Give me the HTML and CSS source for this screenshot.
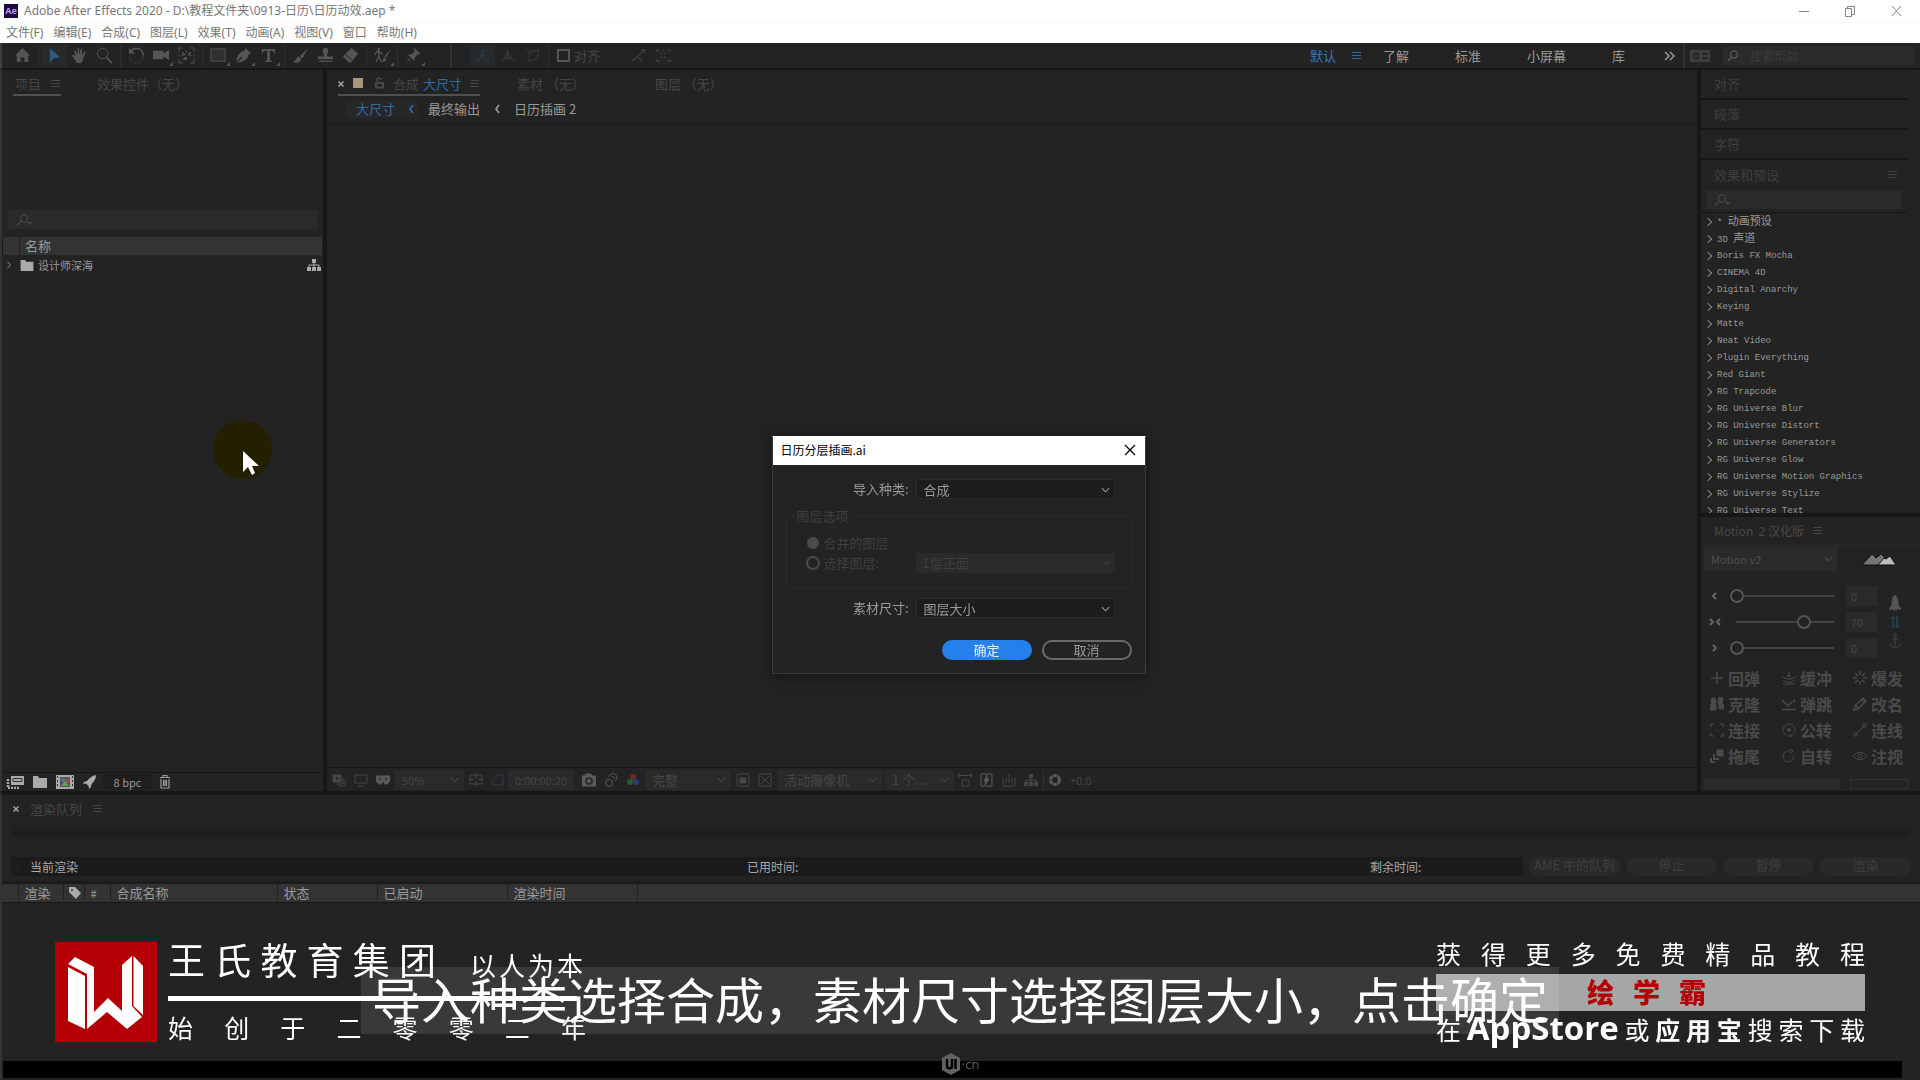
FILE: index.html
```html
<!DOCTYPE html>
<html lang="zh-CN">
<head>
    <meta charset="UTF-8">
    <meta name="viewport" content="width=device-width, initial-scale=1.0">
    <title>Adobe After Effects 2020</title>
    <link rel="stylesheet" href="styles.css">
</head>
<body>

<!-- shared icons -->
<svg class="sprite" aria-hidden="true">
    <symbol id="i-menu" viewBox="0 0 10 10"><path d="M0 1.5h9M0 4.5h9M0 7.5h9" stroke="currentColor" stroke-width="1"/></symbol>
    <symbol id="i-down" viewBox="0 0 10 6"><path d="M1 1l4 4 4-4" fill="none" stroke="currentColor" stroke-width="1.2"/></symbol>
    <symbol id="i-right" viewBox="0 0 6 10"><path d="M1 1l4 4-4 4" fill="none" stroke="currentColor" stroke-width="1.2"/></symbol>
    <symbol id="i-left" viewBox="0 0 6 10"><path d="M5 1L2 5l3 4" fill="none" stroke="currentColor" stroke-width="1.7"/></symbol>
    <symbol id="i-x" viewBox="0 0 8 8"><path d="M1.5 1.5l5 5M6.5 1.5l-5 5" stroke="currentColor" stroke-width="1.4"/></symbol>
    <symbol id="i-find" viewBox="0 0 18 12"><circle cx="8" cy="4.5" r="3.6" fill="none" stroke="currentColor" stroke-width="1.3"/><path d="M5.5 7L1 11.2" stroke="currentColor" stroke-width="1.4"/><path d="M11 8h5.400l-2.700 3z" fill="currentColor"/></symbol>
    <symbol id="i-tree" viewBox="0 0 14 14"><path d="M5 1h4v4H5zM0 9h4v4H0zM5 9h4v4H5zM10 9h4v4h-4z" fill="currentColor"/><path d="M7 5v4M2 9V7h10v2" fill="none" stroke="currentColor"/></symbol>
    <symbol id="i-folder" viewBox="0 0 14 12"><path d="M0 0h5l1 2h8v10H0z" fill="currentColor"/></symbol>
</svg>

<div class="app">
    <header class="titlebar">
        <svg class="ae-logo" viewBox="0 0 14 14"><rect width="14" height="14" fill="#1f0740"/><text x="7" y="10" text-anchor="middle">Ae</text></svg>
        <h1>Adobe After Effects 2020 - D:\教程文件夹\0913-日历\日历动效.aep *</h1>
        <div class="window-btns">
            <button aria-label="最小化"><svg viewBox="0 0 12 12"><path d="M1 6.500h10"/></svg></button>
            <button aria-label="还原"><svg viewBox="0 0 12 12"><path d="M1.500 3.500h6v8h-6zM3.500 3.500v-2h7v8h-3"/></svg></button>
            <button aria-label="关闭"><svg viewBox="0 0 12 12"><path d="M2 1l9 10M11 1L2 11"/></svg></button>
        </div>
    </header>
    <nav class="menubar">
        <button>文件(F)</button>
        <button>编辑(E)</button>
        <button>合成(C)</button>
        <button>图层(L)</button>
        <button>效果(T)</button>
        <button>动画(A)</button>
        <button>视图(V)</button>
        <button>窗口</button>
        <button>帮助(H)</button>
    </nav>

    <div class="toolbar">
        <div class="tools">
            <button class="tool" aria-label="主页"><svg viewBox="0 0 18 18"><path class="fill" d="M9 1L1 9h2v7h4v-5h4v5h4V9h2z"/></svg></button>
        </div>
        <div class="tools">
            <button class="tool active" aria-label="选取"><svg viewBox="0 0 18 18"><path class="fill" d="M4 1v16l4-5 7-1z"/></svg></button>
            <button class="tool" aria-label="手形"><svg viewBox="0 0 18 18"><path class="fill" d="M6 17c-1-3-3-5-5-8l1-1 3 2-2-6 1.500-.500L7 8V1h1.700v7l1.700-6.500 1.500.400L11.300 9l3-4.500 1.200.800-2.500 6.700c-.500 2-1 3-2 5z"/></svg></button>
            <button class="tool" aria-label="缩放"><svg viewBox="0 0 18 18"><circle cx="7" cy="7" r="5.500"/><path d="M11 11l6 6" stroke-width="2"/></svg></button>
        </div>
        <div class="tools">
            <button class="tool" aria-label="旋转"><svg viewBox="0 0 18 18"><path d="M3 5a7 7 0 0 1 13 4" stroke-width="1.800"/><path d="M16 10a7 7 0 0 1-14 0" stroke-dasharray="1.500 1.500"/><path class="fill" d="M1 1v6h6z"/></svg></button>
            <button class="tool more" aria-label="摄像机"><svg viewBox="0 0 18 18"><path class="fill" d="M0 4h11v3l6-4v11l-6-4v3H0z"/></svg></button>
            <button class="tool" aria-label="锚点"><svg viewBox="0 0 18 18"><path d="M1 5V1h4M13 1h4v4M17 13v4h-4M5 17H1v-4M9 4v2M9 12v2M4 9h2M12 9h2M1 8v2M17 8v2" /><path class="fill" d="M5 5l3 3-1 1-3-2zM13 5l-3 3 1 1 3-2zM5 13l3-3 2 2-3 2zM13 13l-3-3z"/></svg></button>
        </div>
        <div class="tools">
            <button class="tool more" aria-label="矩形"><svg viewBox="0 0 18 18"><rect x="1" y="2" width="15" height="13" fill="#303030"/></svg></button>
            <button class="tool more" aria-label="钢笔"><svg viewBox="0 0 18 18"><path class="fill" d="M11 1l6 6-3 1c0 5-4 7-12 9l6-6-1-1-6 6C2 9 5 5 10 4z"/></svg></button>
            <button class="tool more" aria-label="文字"><svg viewBox="0 0 18 18"><path class="fill" d="M2 2h14v5h-1c0-2-1-3-3-3h-1.500v10l2 .500V16h-7v-1.500l2-.500V4H6C4 4 3 5 3 7H2z"/></svg></button>
        </div>
        <div class="tools">
            <button class="tool" aria-label="画笔"><svg viewBox="0 0 18 18"><path class="fill" d="M17 1l-6 11-3-2zM7 10l3 3c-2 4-5 4-9 3 3-1 3-5 6-6z"/></svg></button>
            <button class="tool" aria-label="仿制图章"><svg viewBox="0 0 18 18"><path class="fill" d="M9 1a3 3 0 0 1 3 3c0 2-1.500 3-1.500 6H17v3H1v-3h6.500C7.500 7 6 6 6 4a3 3 0 0 1 3-3zM2 14.500h14V16H2z"/></svg></button>
            <button class="tool" aria-label="橡皮擦"><svg viewBox="0 0 18 18"><path class="fill" d="M10 1l7 6-8 10-3-2-5-5z"/><path d="M4 8l7 6" stroke="#232323"/></svg></button>
        </div>
        <div class="tools roto">
            <button class="tool more" aria-label="Roto 笔刷"><svg viewBox="0 0 18 18"><circle class="fill" cx="5" cy="2.500" r="1.500"/><path d="M1 8l2-3h3l3 3M5 5v5l3 6M5 10l-3 6" stroke-width="1.500"/><path class="fill" d="M18 2l-5 9-2-1zM11 11l2 2c-1 3-3 3-5 2 2 0 1-3 3-4z"/></svg></button>
        </div>
        <div class="tools last">
            <button class="tool more" aria-label="人偶"><svg viewBox="0 0 18 18"><path class="fill" d="M10 1l6 6-1 1h-2l-3 4v3L3 8h3l4-3V3L9 2zM5 12l1 1-5 4z"/></svg></button>
        </div>
        <div class="tools axis">
            <button class="tool active" aria-label="本地轴"><svg viewBox="0 0 18 18"><path d="M9 2v8l-7 5M9 10l7 5M9 10l-3-2M9 10l3-2"/></svg></button>
            <button class="tool" aria-label="世界轴"><svg viewBox="0 0 18 18"><path d="M9 2v8l-7 5M9 10l7 5M9 5l4 7H5z"/></svg></button>
            <button class="tool" aria-label="视图轴"><svg viewBox="0 0 18 18"><path d="M2 2l4 4M6 14l-2 2M7 5l9-2-2 9-6 3-3-3z"/></svg></button>
        </div>
        <label class="snap"><input type="checkbox">对齐</label>
        <div class="tools snap-opts">
            <button class="tool" aria-label="对齐选项"><svg viewBox="0 0 18 18"><path d="M2 15l6-5 5 5M8 10l5-5" stroke-width="1.500"/><path class="fill" d="M11 2h5v5z"/></svg></button>
            <button class="tool" aria-label="对齐边缘"><svg viewBox="0 0 18 18"><path d="M2 5V3h3M13 3h3v2M16 13v2h-3M5 15H2v-2M6 6l2 2M12 6l-2 2M6 12l2-2M12 12l-2-2M9 3v1" stroke-width="1.500"/></svg></button>
        </div>
        <div class="workspaces">
            <button class="current">默认</button>
            <svg class="menu-icon blue"><use href="#i-menu"/></svg>
            <button>了解</button>
            <button>标准</button>
            <button>小屏幕</button>
            <button>库</button>
            <button class="overflow" aria-label="更多"><svg viewBox="0 0 12 10"><path d="M1 1l4 4-4 4M6 1l4 4-4 4" fill="none" stroke="currentColor" stroke-width="1.500"/></svg></button>
        </div>
        <div class="help">
            <svg class="sync" viewBox="0 0 20 12"><rect width="20" height="12" rx="1" fill="#3e3e3e"/><circle cx="6" cy="6" r="2.500" fill="none" stroke="#232323" stroke-width="2"/><path d="M12 4h6M12 8h6" stroke="#232323" stroke-width="2"/></svg>
            <label class="search"><svg viewBox="0 0 12 12"><circle cx="7" cy="4.500" r="3.500" fill="none" stroke="#555" stroke-width="1.500"/><path d="M4.500 7L1 11" stroke="#555" stroke-width="1.800"/></svg><input type="text" placeholder="搜索帮助" aria-label="搜索帮助"></label>
        </div>
    </div>

    <main class="workspace">
        <section class="panel project">
            <div class="tabs">
                <div class="tab on">项目 <svg class="menu-icon"><use href="#i-menu"/></svg></div>
                <div class="tab">效果控件（无）</div>
            </div>
            <label class="search"><svg class="find"><use href="#i-find"/></svg><input type="text" aria-label="搜索项目"></label>
            <div class="list-head"><span>名称</span></div>
            <div class="item">
                <svg class="arrow"><use href="#i-right"/></svg>
                <svg class="folder"><use href="#i-folder"/></svg>
                <span>设计师深海</span>
                <svg class="tree"><use href="#i-tree"/></svg>
            </div>
            <div class="project-foot">
                <button aria-label="解释素材"><svg viewBox="0 0 18 14"><path fill="#aaa" d="M5 1h13v9H5z"/><path d="M7 3.500h9v3H7z" fill="none" stroke="#333"/><path d="M2 4v9h12" fill="none" stroke="#aaa" stroke-width="2.500" stroke-dasharray="2 1"/></svg></button>
                <button aria-label="新建文件夹"><svg viewBox="0 0 18 14"><path fill="#aaa" d="M2 1h5l1 2h8v10H2z"/></svg></button>
                <button aria-label="新建合成"><svg viewBox="0 0 18 14"><path fill="#aaa" d="M0 0h18v14H0z"/><path d="M1.500 1v12M16.500 1v12" stroke="#333" stroke-dasharray="2 2"/><path fill="#555" d="M4 2h10v10H4z"/><circle cx="7" cy="5" r="2" fill="#4775b5"/><path d="M9 4h4v4H9z" fill="#a64b40"/><path d="M5 11l4-5 4 5z" fill="#65a35d"/></svg></button>
                <button aria-label="项目设置"><svg viewBox="0 0 18 14"><path fill="#aaa" d="M15 0c-5 1-7 4-9 6l-3 1-1 2 3-.500 2.500 2.500L8 14l2-2 .500-3C13 7 15 4 15 0z"/></svg></button>
                <button class="bpc">8 bpc</button>
                <button aria-label="删除"><svg viewBox="0 0 18 14"><path d="M4 2.500h10M7 2V.500h4V2M5 4v9h8V4M7.500 5v6M9 5v6M10.500 5v6" fill="none" stroke="#999" stroke-width="1.200"/></svg></button>
            </div>
        </section>

        <section class="panel viewer">
            <div class="tabs">
                <div class="tab on">
                    <svg class="close"><use href="#i-x"/></svg>
                    <span class="swatch"></span>
                    <svg class="lock" viewBox="0 0 10 12"><path d="M1 6h7v4.500H1z" fill="none" stroke="currentColor" stroke-width="2"/><path d="M2 5V3a2 2 0 0 1 4 0" fill="none" stroke="currentColor" stroke-width="1.500"/></svg>
                    <span>合成</span>
                    <span class="blue">大尺寸</span>
                    <svg class="menu-icon"><use href="#i-menu"/></svg>
                </div>
                <div class="tab footage">素材 （无）</div>
                <div class="tab layer">图层 （无）</div>
            </div>
            <div class="crumbs">
                <a href="#" class="here">大尺寸 <svg><use href="#i-left"/></svg></a>
                <a href="#">最终输出</a>
                <svg><use href="#i-left"/></svg>
                <a href="#">日历插画 2</a>
            </div>
            <div class="stage"></div>
            <div class="viewer-foot">
                <svg viewBox="0 0 14 14"><path class="fill" d="M1 2h8v7H1z"/><path d="M11 5v6H4M13 7v6H6"/><path d="M4 4l3 1.500L4 7z" fill="#232323" stroke="none"/></svg>
                <svg viewBox="0 0 14 14"><path d="M1 2h12v8H1zM4 13h6"/></svg>
                <svg class="bright" viewBox="0 0 14 14"><path class="fill" d="M0 3h14v5l-3 3H9L7 8l-2 3H3L0 8z"/><circle cx="4" cy="6" r="1.500" fill="#232323"/><circle cx="10" cy="6" r="1.500" fill="#232323"/></svg>
                <span class="select zoom"><select aria-label="放大率"><option>50%</option></select><svg><use href="#i-down"/></svg></span>
                <svg viewBox="0 0 14 14"><path d="M1 2h12v9H1zM7 0v5M7 8v5M0 6.500h5M9 6.500h5"/></svg>
                <svg class="mask" viewBox="0 0 14 14"><path d="M1 12c0-6 3-9 9-10h2v10z"/></svg>
                <button class="time">0:00:00:20</button>
                <svg class="bright" viewBox="0 0 14 14"><path class="fill" d="M0 3h3l1-2h5l1 2h4v10H0z"/><circle cx="7" cy="8" r="3" stroke="#232323" stroke-width="1.500"/></svg>
                <svg class="bright" viewBox="0 0 14 14"><circle cx="5" cy="10" r="3.500"/><path d="M5 4a4 4 0 1 1 6 4M8 3l3 3"/></svg>
                <svg viewBox="0 0 14 14"><circle cx="7" cy="4" r="3" fill="#6b2a26" stroke="none"/><circle cx="4" cy="9" r="3" fill="#26602c" stroke="none"/><circle cx="10" cy="9" r="3" fill="#2c3d78" stroke="none"/></svg>
                <span class="select quality"><select aria-label="分辨率"><option>完整</option></select><svg><use href="#i-down"/></svg></span>
                <svg viewBox="0 0 14 14"><path d="M1 1h12v12H1z"/><path class="fill" d="M4 5h6v5H4z"/></svg>
                <svg viewBox="0 0 14 14"><path d="M1 1h12v12H1zM3 3l8 8M11 3l-8 8"/></svg>
                <span class="select camera"><select aria-label="3D 视图"><option>活动摄像机</option></select><svg><use href="#i-down"/></svg></span>
                <span class="select views"><select aria-label="视图布局"><option>1 个...</option></select><svg><use href="#i-down"/></svg></span>
                <svg viewBox="0 0 14 14"><path d="M0 2.500h14M1 0v5M13 0v5M4 7h7v6H4z"/></svg>
                <svg class="bright" viewBox="0 0 14 14"><path d="M1 1h11v12H1z"/><path class="fill" d="M7 2L4 8h2l-1 4 4-6H7z"/></svg>
                <svg viewBox="0 0 14 14"><path d="M1 5v8h12V5M4 10V5M7 10V1M10 10V5"/></svg>
                <svg class="tree"><use href="#i-tree"/></svg>
                <span class="sep"></span>
                <svg class="bright" viewBox="0 0 14 14"><circle cx="7" cy="7" r="4.500" stroke-width="3" stroke-dasharray="4 .700"/></svg>
                <button class="exposure">+0.0</button>
            </div>
        </section>

        <aside class="side">
            <div class="stack">
                <h2>对齐</h2>
                <h2>段落</h2>
                <h2>字符</h2>
                <h2 class="open">效果和预设 <svg class="menu-icon"><use href="#i-menu"/></svg></h2>
                <label class="search"><svg class="find"><use href="#i-find"/></svg><input type="text" aria-label="搜索效果"></label>
                <ul class="effects">
                    <li>* <span class="zh">动画预设</span></li>
                    <li>3D <span class="zh">声道</span></li>
                    <li>Boris FX Mocha</li>
                    <li>CINEMA 4D</li>
                    <li>Digital Anarchy</li>
                    <li>Keying</li>
                    <li>Matte</li>
                    <li>Neat Video</li>
                    <li>Plugin Everything</li>
                    <li>Red Giant</li>
                    <li>RG Trapcode</li>
                    <li>RG Universe Blur</li>
                    <li>RG Universe Distort</li>
                    <li>RG Universe Generators</li>
                    <li>RG Universe Glow</li>
                    <li>RG Universe Motion Graphics</li>
                    <li>RG Universe Stylize</li>
                    <li>RG Universe Text</li>
                </ul>
            </div>
            <div class="motion">
                <h2>Motion&nbsp; 2 汉化版 <svg class="menu-icon"><use href="#i-menu"/></svg></h2>
                <div class="motion-top">
                    <span class="select"><select aria-label="脚本"><option>Motion v2</option></select><svg><use href="#i-down"/></svg></span>
                    <svg class="mountains" viewBox="0 0 36 14"><path d="M1 13L11 2l4 4 5-4 6 6 2 5z" fill="#777" stroke="#111"/><path d="M17 13l6-7 2 1 4-3 6 9z" fill="#bbb" stroke="#111"/></svg>
                </div>
                <div class="sliders">
                    <div class="slide-rows">
                        <div class="slide"><svg class="ico" viewBox="0 0 12 10"><path d="M7 2L4 5l3 3"/></svg><input type="range" min="0" max="100" value="0" aria-label="缓入"><input type="text" value="0" aria-label="缓入值"></div>
                        <div class="slide"><svg class="ico" viewBox="0 0 12 10"><path d="M1 2l3 3-3 3M11 2L8 5l3 3"/></svg><input type="range" min="0" max="100" value="74" aria-label="缓动"><input type="text" value="70" aria-label="缓动值"></div>
                        <div class="slide"><svg class="ico" viewBox="0 0 12 10"><path d="M4 2l3 3-3 3"/></svg><input type="range" min="0" max="100" value="0" aria-label="缓出"><input type="text" value="0" aria-label="缓出值"></div>
                    </div>
                    <div class="slide-icons">
                        <svg viewBox="0 0 12 16"><path d="M6 0C3 3 3 6 3 10l-3 4h12l-3-4c0-4 0-7-3-10zM4 15h4" fill="#555" stroke="#555"/></svg>
                        <svg viewBox="0 0 12 16"><path d="M4 14V3M2 5l2-2.500L6 5M8 2v11M6 11l2 2.500 2-2.500" fill="none" stroke="#28516a"/></svg>
                        <svg viewBox="0 0 12 16"><path d="M6 4v11M3 6h6M1 10c0 3 2 5 5 5s5-2 5-5" fill="none" stroke="#444"/><circle cx="6" cy="2.500" r="1.500" fill="none" stroke="#444"/></svg>
                    </div>
                </div>
                <div class="actions">
                    <button><svg viewBox="0 0 14 14"><path d="M7 1v12M1 7h12" stroke-width="1.500"/></svg>回弹</button>
                    <button><svg viewBox="0 0 14 14"><path d="M7 0v6M5 4l2 2 2-2M0 5c3 4 11 4 14 0M1 9c4 3 8 3 12 0M1 13h12"/></svg>缓冲</button>
                    <button><svg viewBox="0 0 14 14"><path d="M7 0v4M7 10v4M0 7h4M10 7h4M2 2l3 3M9 9l3 3M12 2L9 5M5 9l-3 3" stroke-width="1.500"/></svg>爆发</button>
                    <button><svg viewBox="0 0 14 14"><path class="fill" d="M2 1h3l1 3-1 3 1 1v5H0V8l2-1-1-3zM9 0h3l1 3-1 3 2 2v4H9V8L8 6V3z"/></svg>克隆</button>
                    <button><svg viewBox="0 0 14 14"><path d="M0 3l6 6 4-4M0 12.500h14" stroke-width="1.500"/><circle class="fill" cx="12" cy="4" r="1"/></svg>弹跳</button>
                    <button><svg viewBox="0 0 14 14"><path d="M1 13l1-4 8-8 3 3-8 8zM9 3l3 3M3 9l3 3" stroke-width="1.500"/></svg>改名</button>
                    <button><svg viewBox="0 0 14 14"><path d="M1 4V1h3M10 1h3v3M13 10v3h-3M4 13H1v-3M6.500 7h1"/></svg>连接</button>
                    <button><svg viewBox="0 0 14 14"><path d="M5 12.500A6 6 0 1 1 9 12.500"/><circle class="fill" cx="7" cy="7" r="1.500"/><circle class="fill" cx="8" cy="13" r="1"/></svg>公转</button>
                    <button><svg viewBox="0 0 14 14"><path d="M1 10h3v3H1zM10 1h3v3h-3zM4 10l6-6"/></svg>连线</button>
                    <button><svg viewBox="0 0 14 14"><path class="fill" d="M7 1h6v6H7z"/><path d="M4 5v5h5M1 9v4h4" stroke-width="2"/></svg>拖尾</button>
                    <button><svg viewBox="0 0 14 14"><path d="M12 7a5.500 5.500 0 1 1-4-5M8 0l3 2-3 2"/></svg>自转</button>
                    <button><svg viewBox="0 0 14 14"><path d="M0 7c4-5 10-5 14 0-4 5-10 5-14 0z"/><circle cx="7" cy="7" r="2"/></svg>注视</button>
                </div>
                <div class="motion-more">
                    <span class="bar"></span>
                    <span class="gear"></span>
                </div>
            </div>
        </aside>
    </main>

    <section class="queue">
        <div class="queue-tab">
            <svg class="close"><use href="#i-x"/></svg>
            <span>渲染队列</span>
            <svg class="menu-icon"><use href="#i-menu"/></svg>
        </div>
        <div class="progress"></div>
        <div class="queue-row">
            <div class="status">
                <svg><use href="#i-right"/></svg>
                <span>当前渲染</span>
                <span>已用时间:</span>
                <span>剩余时间:</span>
            </div>
            <button disabled>AME 中的队列</button>
            <button disabled>停止</button>
            <button disabled>暂停</button>
            <button disabled>渲染</button>
        </div>
        <table>
            <thead>
                <tr>
                    <th class="c-pad"></th>
                    <th class="c-render">渲染</th>
                    <th class="c-tag"><svg viewBox="0 0 14 12"><path d="M1 0h6l6 6-5 6-7-7z" fill="#aaa"/><circle cx="4" cy="3" r="1" fill="#333"/></svg></th>
                    <th class="c-num">#</th>
                    <th class="c-name">合成名称</th>
                    <th class="c-state">状态</th>
                    <th class="c-start">已启动</th>
                    <th class="c-time">渲染时间</th>
                    <th></th>
                </tr>
            </thead>
        </table>
        <div class="queue-list"></div>
        <div class="black-bar"></div>
    </section>
</div>

<div class="overlay">
    <form class="dialog" role="dialog" aria-labelledby="dlg-title">
        <div class="dialog-head">
            <h2 id="dlg-title">日历分层插画.ai</h2>
            <button type="button" aria-label="关闭"><svg viewBox="0 0 12 12"><path d="M1 1l10 10M11 1L1 11" stroke="#000" stroke-width="1.200"/></svg></button>
        </div>
        <div class="row">
            <label for="kind">导入种类:</label>
            <span class="select"><select id="kind"><option>合成</option></select><svg><use href="#i-down"/></svg></span>
        </div>
        <fieldset disabled>
            <legend>图层选项</legend>
            <label class="radio"><input type="radio" name="layer" checked>合并的图层</label>
            <div class="pick">
                <label class="radio"><input type="radio" name="layer">选择图层:</label>
                <span class="select"><select aria-label="选择图层"><option>1层正面</option></select><svg><use href="#i-down"/></svg></span>
            </div>
        </fieldset>
        <div class="row">
            <label for="size">素材尺寸:</label>
            <span class="select"><select id="size"><option>图层大小</option></select><svg><use href="#i-down"/></svg></span>
        </div>
        <div class="dialog-btns">
            <button type="button" class="ok">确定</button>
            <button type="button">取消</button>
        </div>
    </form>
</div>

<div class="pointer"><svg viewBox="0 0 18 26"><path d="M1 1v21l5-5 4 8 3-2-3-7h7z" fill="#fff"/></svg></div>

<div class="brand">
    <svg class="brand-logo" viewBox="0 0 102 100">
        <rect width="102" height="100" fill="#b40004"/>
        <path fill="#fff" d="M13 25l17 9v53l-17-8zM13 22l7-7 19 10v45l14-14 14 13V23l10-9v50l10 11-15 12-20-17-20 17V32zM78.500 14L88 24v49l-9.500-9z"/>
    </svg>
    <div class="brand-text">
        <p class="top"><span class="name">王氏教育集团</span><span class="motto">以人为本</span></p>
        <hr>
        <p class="since">始创于二零零二年</p>
    </div>
</div>

<div class="promo">
    <p class="get">获得更多免费精品教程</p>
    <p class="app-name"><span>绘学霸</span></p>
    <p class="stores">在<b class="latin">AppStore</b>或<b>应用宝</b>搜索下载</p>
</div>

<p class="subtitle">导入种类选择合成，素材尺寸选择图层大小，点击确定</p>

<div class="uicn">
    <svg viewBox="0 0 20 22"><path d="M10 0l9 5v12l-9 5-9-5V5z" fill="#626262"/><path d="M6 6v7c0 3 5 3 5 0V6M14.500 6v10" fill="none" stroke="#000" stroke-width="2.500"/></svg>
    <span>·cn</span>
</div>

</body>
</html>
```

FILE: styles.css
```css
:root {
    --bg: #232323;
    --gap: #171717;
    --field: #2a2a2a;
    --head: #333333;
    --dim: #464646;
    --text: #9a9a9a;
    --blue: #2f6aa8;
}

* {
    box-sizing: border-box;
}

body {
    margin: 0;
    background: var(--bg);
    color: var(--text);
    font-family: "Noto Sans CJK SC", sans-serif;
    font-size: 13px;
    line-height: 20px;
    overflow: hidden;
}

h1, h2, p, ul {
    margin: 0;
    padding: 0;
    font-weight: normal;
}

button, input, select {
    font: inherit;
    color: inherit;
    background: none;
    border: 0;
    padding: 0;
    margin: 0;
}

a {
    color: inherit;
    text-decoration: none;
}

svg {
    display: block;
    flex: none;
}

.sprite {
    position: absolute;
    width: 0;
    height: 0;
}

.blue {
    color: var(--blue);
}

.menu-icon {
    width: 10px;
    height: 10px;
}

.app {
    display: flex;
    flex-direction: column;
    min-height: 100vh;
}

/* window chrome */
.titlebar, .menubar {
    display: flex;
    align-items: center;
    background: #fff;
    color: #777;
    font-family: "Noto Sans", "Noto Sans CJK SC", sans-serif;
    font-size: 12px;
}

.titlebar {
    height: 23px;
    padding: 0 17px 0 4px;
    border-bottom: 1px solid #f8f8f8;
}

.titlebar h1 {
    flex: 1;
    margin-left: 6px;
    font-size: 12px;
}

.ae-logo {
    width: 14px;
    height: 14px;
}

.ae-logo text {
    font-size: 9px;
    font-weight: bold;
    fill: #b99ae8;
}

.window-btns {
    display: flex;
    gap: 33px;
}

.window-btns svg {
    width: 12px;
    height: 12px;
    margin-right: 1px;
    fill: none;
    stroke: #888;
}

.menubar {
    height: 20px;
    gap: 10px;
    padding-left: 6px;
}

/* toolbar */
.toolbar {
    display: flex;
    align-items: center;
    height: 27px;
    border-bottom: 2px solid var(--gap);
    border-left: 2px solid #3b3f45;
}

.tools {
    display: flex;
    align-items: center;
    padding: 0 3px;
    border-right: 1px solid #303030;
}

.tools:first-child {
    padding-left: 8px;
}

.tools.roto {
    padding-right: 2px;
}

.tools.last {
    padding-right: 24px;
    border-right: 2px solid #333;
}

.tool {
    position: relative;
    display: flex;
    align-items: center;
    justify-content: center;
    width: 25px;
    height: 22px;
    color: #555;
}

.tool svg {
    width: 17px;
    height: 17px;
    fill: none;
    stroke: currentColor;
}

.tool .fill {
    fill: currentColor;
    stroke: none;
}

.tool.active {
    background: #272a2d;
    color: #2f5980;
}

.tool.more::after {
    content: "";
    position: absolute;
    right: 1px;
    bottom: 1px;
    border: 2px solid;
    border-color: transparent #555 #555 transparent;
}

.axis {
    margin-left: 15px;
}

.axis .tool, .snap-opts .tool {
    color: #3e3e3e;
}

.axis .tool.active {
    color: #28435a;
}

.snap {
    display: flex;
    align-items: center;
    gap: 4px;
    margin: 0 23px 0 8px;
    color: var(--dim);
}

.snap input {
    appearance: none;
    width: 13px;
    height: 13px;
    border: 2px solid #555;
}

.snap-opts {
    border: 0;
}

.workspaces {
    display: flex;
    align-items: center;
    height: 100%;
    margin-left: auto;
    padding-right: 7px;
    border-right: 2px solid #333;
}

.workspaces button {
    margin-right: 46px;
}

.workspaces .current {
    margin-right: 16px;
    color: #2f77c0;
}

.workspaces .menu-icon {
    margin-right: 21px;
}

.workspaces button:nth-last-child(2) {
    margin-right: 39px;
}

.workspaces .overflow {
    width: 12px;
    margin: 0;
}

.help {
    display: flex;
    align-items: center;
    padding: 0 5px;
    gap: 12px;
}

.sync {
    width: 20px;
    height: 12px;
}

.search {
    display: flex;
    align-items: center;
    height: 19px;
    padding: 0 8px;
    background: var(--field);
    border-radius: 2px;
    color: var(--dim);
}

.search input {
    flex: 1;
    min-width: 0;
    height: 19px;
    outline: 0;
}

.search input::placeholder {
    color: #3c3c3c;
    font-size: 12px;
}

.help .search {
    width: 193px;
    gap: 11px;
    padding-left: 5px;
}

.help .search svg {
    width: 12px;
    height: 12px;
}

.find {
    width: 18px;
    height: 12px;
}

/* panels */
.workspace {
    flex: 1;
    display: grid;
    grid-template-columns: 321px minmax(0, 1fr) 219px;
    gap: 4px;
    min-height: 0;
    background: var(--gap);
    border-left: 2px solid #343434;
}

.panel {
    display: flex;
    flex-direction: column;
    background: var(--bg);
}

.tabs {
    display: flex;
    padding-left: 11px;
    color: var(--dim);
}

.tab {
    display: flex;
    align-items: center;
    height: 26px;
    padding-top: 4px;
    border-bottom: 2px solid transparent;
}

.tab.on {
    border-color: #505050;
}

.project .tab.on {
    gap: 10px;
    margin-right: 36px;
    padding-left: 2px;
}

.project > .search {
    margin: 114px 5px 8px 6px;
}

.list-head {
    height: 18px;
    margin-right: 1px;
    padding-left: 16px;
    background: var(--head);
    border-left: 1px solid var(--gap);
    line-height: 18px;
}

.list-head span {
    display: block;
    padding-left: 5px;
    border-left: 1px solid #222;
}

.item {
    display: flex;
    align-items: center;
    height: 20px;
    margin-bottom: auto;
    padding: 0 2px 0 4px;
    font-size: 11px;
}

.arrow {
    width: 6px;
    height: 8px;
}

.item .folder {
    width: 14px;
    height: 11px;
    margin: 0 4px 0 8px;
    color: #aaa;
}

.item .tree {
    width: 14px;
    height: 14px;
    margin-left: auto;
    color: #aaa;
}

.project-foot {
    display: flex;
    align-items: center;
    gap: 7px;
    height: 19px;
    padding: 0 0 1px 4px;
    border-top: 1px solid var(--gap);
}

.project-foot svg {
    width: 18px;
    height: 14px;
}

.bpc {
    width: 49px;
    margin: 0 -3px 0 -3px;
    background: #1e1e1e;
    font-size: 11px;
    line-height: 16px;
}

.viewer .tab svg.close {
    width: 8px;
    height: 8px;
    margin: 0 8px 0 -1px;
    color: #aaa;
}

.close {
    width: 8px;
    height: 8px;
    color: #aaa;
}

.swatch {
    width: 10px;
    height: 10px;
    margin: 0 12px 2px 0;
    background: #a8977a;
}

.lock {
    width: 10px;
    height: 12px;
    margin: 0 8px 2px 0;
}

.viewer .tab .blue {
    margin: 0 8px 0 4px;
}

.footage {
    margin-left: 37px;
}

.layer {
    margin-left: 70px;
}

.crumbs {
    display: flex;
    align-items: center;
    height: 28px;
    padding: 0 0 2px 19px;
    border-bottom: 1px solid #1c1c1c;
    gap: 14px;
}

.crumbs svg {
    width: 6px;
    height: 10px;
}

.here {
    display: flex;
    align-items: center;
    gap: 13px;
    height: 18px;
    margin-right: -4px;
    padding: 0 4px 0 10px;
    background: #272727;
    color: var(--blue);
}

.stage {
    flex: 1;
}

.viewer-foot {
    display: flex;
    align-items: center;
    gap: 8px;
    height: 24px;
    padding-left: 5px;
    border-top: 1px solid var(--gap);
    color: var(--dim);
}

.viewer-foot > svg {
    width: 14px;
    height: 14px;
    fill: none;
    stroke: currentColor;
}

.viewer-foot > .bright {
    color: #5a5a5a;
}

.viewer-foot .fill, .actions .fill {
    fill: currentColor;
}

.viewer-foot > .tree {
    stroke: none;
}

.viewer-foot > .mask {
    color: #2b3c58;
}

.viewer-foot .sep {
    width: 1px;
    height: 20px;
    margin: 0 -4px 0 -3px;
    background: #333;
}

.time {
    width: 66px;
    margin-left: -5px;
    background: var(--field);
    font-size: 11px;
}

.exposure {
    font-size: 11px;
}

.select {
    position: relative;
    display: block;
    background: var(--field);
}

.select select {
    appearance: none;
    display: block;
    width: 100%;
    height: 20px;
    padding: 0 20px 0 7px;
    outline: 0;
    opacity: 1;
}

.select svg {
    position: absolute;
    right: 5px;
    top: 7px;
    width: 9px;
    height: 6px;
    pointer-events: none;
}

.zoom {
    width: 69px;
    margin: 0 -3px;
    font-size: 11px;
}

.quality {
    width: 86px;
    margin: 0 -3px 0 -3px;
}

.camera {
    width: 105px;
    margin-left: -3px;
}

.views {
    width: 69px;
    margin: 0 -4px 0 -5px;
}

/* right column */
.side {
    display: flex;
    flex-direction: column;
    gap: 4px;
    min-height: 0;
}

.stack {
    height: 443px;
    padding-right: 13px;
    overflow: hidden;
    background: var(--bg);
}

.side h2 {
    display: flex;
    align-items: center;
    height: 30px;
    padding-left: 13px;
    border-bottom: 2px solid var(--gap);
    font-size: 13px;
    color: #3f3f3f;
}

.side .open {
    justify-content: space-between;
    padding-right: 9px;
    border: 0;
}

.stack .search {
    margin: 0 5px 3px 5px;
}

.effects {
    border-top: 1px solid #151515;
    padding-top: 1px;
    list-style: none;
    font-family: "Liberation Mono", "Noto Sans CJK SC", monospace;
    font-size: 9px;
    white-space: nowrap;
}

.effects li {
    height: 17px;
    padding-left: 16px;
    line-height: 17px;
    position: relative;
}

.effects li::before {
    content: "";
    position: absolute;
    left: 4px;
    top: 5px;
    width: 5px;
    height: 5px;
    border: solid #888;
    border-width: 1px 1px 0 0;
    transform: rotate(45deg);
}

.effects .zh {
    font-size: 11px;
    line-height: 16px;
}

.motion {
    flex: 1;
    min-height: 0;
    overflow: hidden;
    padding: 0 1px 0 3px;
    background: var(--bg);
    color: #505050;
}

.motion h2 {
    gap: 9px;
    height: 29px;
    padding-left: 10px;
    border-bottom: 1px solid #2c2c2c;
    font-size: 12px;
    color: #484848;
}

.motion-top {
    display: flex;
    align-items: center;
    gap: 23px;
    height: 25px;
}

.motion-top .select {
    width: 134px;
    font-size: 11px;
}

.motion-top select {
    height: 24px;
}

.motion-top .select svg {
    top: 9px;
}

.mountains {
    width: 36px;
    height: 14px;
}

.sliders {
    display: flex;
    gap: 12px;
    padding: 12px 0 4px 5px;
}

.slide {
    display: flex;
    align-items: center;
    height: 26px;
}

.slide .ico {
    width: 12px;
    height: 10px;
    fill: none;
    stroke: #666;
    stroke-width: 2;
}

.slide input[type="range"] {
    appearance: none;
    width: 104px;
    height: 14px;
    margin: 0 12px 0 9px;
    background: linear-gradient(#444, #444) right center / 98px 2px no-repeat;
}

.slide input[type="range"]::-webkit-slider-thumb {
    appearance: none;
    width: 14px;
    height: 14px;
    border: 2px solid #555;
    border-radius: 50%;
    background: var(--bg);
}

.slide input[type="text"] {
    width: 31px;
    height: 20px;
    padding-left: 5px;
    background: var(--field);
    font-size: 11px;
    color: #484848;
}

.slide-icons {
    display: flex;
    flex-direction: column;
    gap: 3px;
    padding-top: 12px;
}

.slide-icons svg {
    width: 12px;
    height: 16px;
}

.actions {
    display: grid;
    grid-template-columns: 72px 71px 1fr;
    padding-left: 6px;
    color: #4a4a4a;
}

.actions button {
    display: flex;
    align-items: center;
    gap: 4px;
    height: 26px;
    font-size: 16px;
    font-weight: bold;
    white-space: nowrap;
}

.actions svg {
    width: 14px;
    height: 14px;
    fill: none;
    stroke: currentColor;
}

.motion-more {
    display: flex;
    gap: 10px;
    margin-top: 10px;
}

.motion-more .bar {
    width: 136px;
    height: 10px;
    background: var(--field);
}

.motion-more .gear {
    width: 58px;
    height: 10px;
    border: 1px solid #333;
}

/* render queue */
.queue {
    border-top: 4px solid var(--gap);
    border-left: 2px solid #343434;
}

.queue-tab {
    display: flex;
    align-items: center;
    height: 28px;
    padding-left: 10px;
    color: var(--dim);
}

.queue-tab span {
    margin: 0 11px 0 10px;
}

.progress {
    height: 8px;
    margin: 6px 10px 20px;
    background: #1e1e1e;
    border-radius: 4px;
}

.queue-row {
    display: flex;
    gap: 6px;
    padding: 0 9px;
    margin-bottom: 5px;
}

.status {
    flex: 1;
    display: grid;
    grid-template-columns: 19px 717px 623px 1fr;
    align-items: center;
    height: 19px;
    background: #1b1b1b;
    font-size: 12px;
    color: #aaa;
}

.status svg {
    width: 6px;
    height: 8px;
    margin-left: 4px;
    color: #333;
}

.queue-row button {
    width: 91px;
    height: 19px;
    padding-bottom: 3px;
    border-radius: 10px;
    background: #292929;
    color: #3f3f3f;
    line-height: 16px;
}

table {
    width: 100%;
    table-layout: fixed;
    border-collapse: collapse;
    border-top: 3px solid #1b1b1b;
    border-bottom: 1px solid var(--gap);
    background: var(--head);
}

th {
    height: 18px;
    padding: 0 0 0 6px;
    border-right: 1px solid #222;
    font-weight: normal;
    line-height: 18px;
    text-align: left;
}

th:last-child {
    border: 0;
}

th svg {
    width: 14px;
    height: 12px;
}

.c-pad {
    width: 16px;
}

.c-render {
    width: 45px;
}

.c-tag {
    width: 21px;
    padding-left: 4px;
}

.c-num {
    width: 26px;
    font-size: 11px;
}

.c-name {
    width: 167px;
}

.c-state {
    width: 100px;
}

.c-start, .c-time {
    width: 130px;
}

.queue-list {
    height: 158px;
}

.black-bar {
    height: 17px;
    margin: 0 18px 2px 1px;
    background: #000;
}

/* import dialog */
.overlay {
    position: fixed;
    inset: 0;
    display: grid;
    place-items: center;
    padding: 30px 3px 0 0;
}

.dialog {
    width: 374px;
    padding-bottom: 13px;
    border: 1px solid #3b3b3b;
    border-top-color: #fff;
    background: var(--bg);
    box-shadow: 0 2px 10px rgba(0, 0, 0, 0.5);
}

.dialog-head {
    display: flex;
    align-items: center;
    justify-content: space-between;
    height: 28px;
    margin: 0 0 14px;
    padding: 0 9px 2px 8px;
    background: #fff;
    color: #000;
}

.dialog-head h2 {
    font-size: 12px;
}

.dialog-head svg {
    width: 12px;
    height: 12px;
}

.row {
    display: grid;
    grid-template-columns: 136px 199px;
    gap: 7px;
    height: 20px;
}

.row label {
    text-align: right;
}

.row .select {
    background: #1d1d1d;
    border: 1px solid #2b2b2b;
}

.row select {
    height: 18px;
}

.dialog .select svg {
    right: 4px;
}

.dialog fieldset {
    margin: 9px 13px 10px;
    padding: 9px 0 14px 19px;
    border: 1px solid #2c2c2c;
    color: #3f3f3f;
}

.dialog legend {
    margin-left: -12px;
    padding: 0 3px;
    height: 16px;
    line-height: 16px;
}

.radio {
    display: flex;
    align-items: center;
    gap: 4px;
    width: 110px;
    height: 20px;
}

.radio input {
    appearance: none;
    width: 14px;
    height: 14px;
    border: 2px solid #4a4a4a;
    border-radius: 50%;
}

.radio input:checked {
    width: 12px;
    height: 12px;
    margin: 0 1px;
    background: #4a4a4a;
}

.pick {
    display: flex;
}

.pick .select {
    width: 199px;
}

.dialog-btns {
    display: flex;
    justify-content: flex-end;
    gap: 10px;
    margin-top: 22px;
    padding-right: 13px;
}

.dialog-btns button {
    width: 90px;
    height: 20px;
    border: 2px solid #6a6a6a;
    border-radius: 10px;
    line-height: 14px;
}

.dialog-btns .ok {
    border-color: #2680eb;
    background: #2680eb;
    color: #e8f1fc;
}

/* mouse highlight */
.pointer {
    position: fixed;
    left: 213px;
    top: 420px;
    width: 59px;
    height: 59px;
    border-radius: 50%;
    background: #232000;
}

.pointer svg {
    width: 18px;
    height: 26px;
    margin: 30px 0 0 29px;
}

/* video overlays */
.brand {
    position: fixed;
    left: 55px;
    bottom: 38px;
    display: flex;
    gap: 11px;
    height: 100px;
    color: #fff;
}

.brand-logo {
    width: 102px;
    height: 100px;
}

.brand-text {
    width: 418px;
}

.brand p, .promo p {
    text-align-last: justify;
    text-justify: inter-character;
}

.brand .top {
    display: flex;
    justify-content: space-between;
    align-items: flex-end;
    width: 415px;
    height: 36px;
}

.brand .name {
    width: 268px;
    font-size: 37px;
    line-height: 38px;
}

.brand .motto {
    width: 113px;
    font-size: 26px;
    line-height: 26px;
}

.brand hr {
    width: 409px;
    height: 5px;
    margin: 18px 0 12px;
    border: 0;
    background: #fff;
}

.brand .since {
    font-size: 25px;
    line-height: 28px;
}

.promo {
    position: fixed;
    right: 55px;
    bottom: 34px;
    width: 429px;
    color: #fff;
    font-size: 25px;
    line-height: 36px;
}

.promo .app-name {
    display: flex;
    justify-content: center;
    height: 37px;
    margin: 3px 0 -1px;
    background: #a6a6a6;
    color: #b40004;
    font-size: 27px;
    font-weight: 900;
}

.promo .app-name span {
    width: 119px;
    margin-right: 8px;
}

.promo .stores {
    height: 36px;
}

.promo .latin {
    font-family: "Open Sans", sans-serif;
    font-size: 33px;
}

.subtitle {
    position: fixed;
    left: 50%;
    bottom: 46px;
    transform: translateX(-50%);
    padding: 0 11px 6px;
    background: rgba(255, 255, 255, 0.1);
    color: #fff;
    font-size: 49px;
    line-height: 61px;
    white-space: nowrap;
}

.uicn {
    position: fixed;
    left: 49%;
    bottom: 5px;
    display: flex;
    align-items: center;
    gap: 1px;
    color: #626262;
    font-family: "Open Sans", sans-serif;
}

.uicn svg {
    width: 20px;
    height: 22px;
}
```
